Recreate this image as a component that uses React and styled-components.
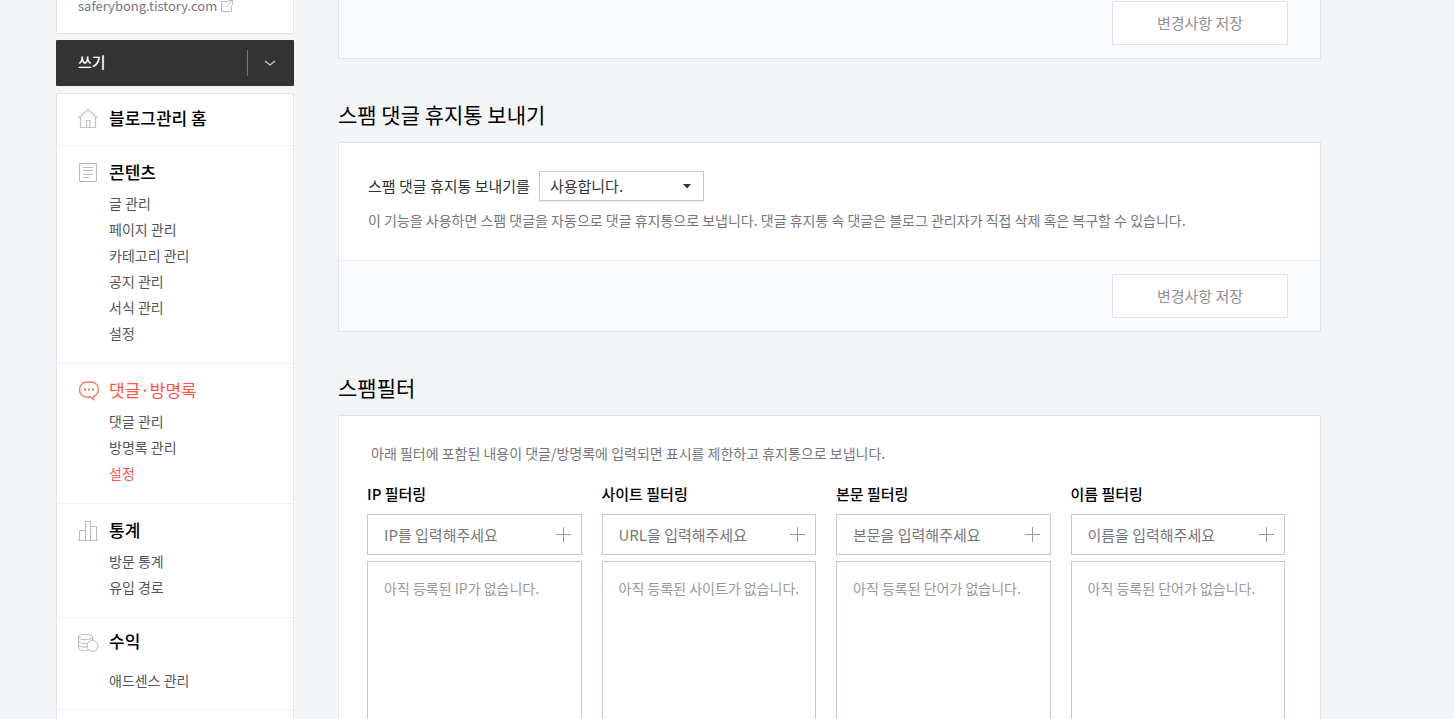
import React from "react";
import styled, { createGlobalStyle } from "styled-components";

const GlobalStyle = createGlobalStyle`
  *, *::before, *::after { box-sizing: border-box; }
  body {
    margin: 0;
    background: #f3f5f7;
    color: #333;
    font-family: "Noto Sans CJK KR", "Noto Sans", sans-serif;
    font-size: 14px;
    line-height: 20px;
  }
  button, input, select { font: inherit; margin: 0; }
  h2, h3, p, ul { margin: 0; padding: 0; font-weight: 400; }
  ul { list-style: none; }
  a { color: inherit; text-decoration: none; }
`;

const Page = styled.div`
  display: flex;
  gap: 44px;
  height: 100vh;
  overflow: hidden;
  padding: 0 133px 0 56px;
`;

const Sidebar = styled.aside`
  flex: 0 0 238px;
`;

const Profile = styled.div`
  height: 34px;
  padding: 0 21px;
  background: #fff;
  border: 1px solid #dfe3ec;
  border-top: 0;
  border-radius: 0 0 2px 2px;
`;

const BlogLink = styled.a`
  display: flex;
  align-items: center;
  gap: 4px;
  height: 11px;
  color: #777;
  font-size: 13px;
`;

const WriteBar = styled.div`
  display: flex;
  align-items: center;
  height: 46px;
  margin: 6px 0 7px;
  background: #333;
  border-radius: 1px;
`;

const WriteButton = styled.button`
  flex: 1;
  height: 46px;
  padding: 0 22px 2px;
  border: 0;
  background: none;
  color: #fff;
  font-size: 15px;
  font-weight: 500;
  text-align: left;
`;

const WriteMore = styled.button`
  display: flex;
  align-items: center;
  justify-content: center;
  width: 47px;
  height: 26px;
  padding: 0 2px 0 0;
  border: 0;
  border-left: 1px solid #777;
  background: none;
`;

const Menu = styled.nav`
  padding-bottom: 20px;
  background: #fff;
  border: 1px solid #dfe3ec;
  border-radius: 1px;
`;

const Group = styled.section`
  padding: ${(p) => (p.$compact ? "10px 21px 16px" : "13px 21px 17px")};
  ${(p) => p.$single && "padding: 11px 21px 14px;"}
  border-bottom: 1px solid #eff1f5;
`;

const GroupTitle = styled.h3`
  display: flex;
  align-items: center;
  gap: 10px;
  line-height: 26px;
  font-size: 17px;
  font-weight: ${(p) => (p.$active ? 400 : 500)};
  color: ${(p) => (p.$active ? "#ff5544" : "#000")};

  svg { flex: 0 0 21px; }
`;

const GroupList = styled.ul`
  margin-top: ${(p) => (p.$compact ? "13px" : "5px")};
  padding-left: 31px;
`;

const Item = styled.li`
  line-height: 26px;
  color: ${(p) => (p.$active ? "#ff5544" : "#555")};
`;

const Main = styled.main`
  flex: 1;
  min-width: 0;
`;

const Title = styled.h2`
  margin: 40px 0 13px;
  font-size: 21px;
  line-height: 30px;
  color: #000;
`;

const Panel = styled.section`
  background: #fff;
  border: 1px solid #dfe3ec;
  ${(p) => p.$continued && "border-top: 0;"}
`;

const PanelFoot = styled.div`
  display: flex;
  justify-content: flex-end;
  padding: ${(p) => (p.$continued ? "1px" : "13px")} 32px 13px;
  background: #fafbfd;
  ${(p) => !p.$continued && "border-top: 1px solid #eff1f5;"}
`;

const SaveButton = styled.button`
  width: 176px;
  height: 44px;
  border: 1px solid #dfe3ec;
  background: #fff;
  color: #919191;
  font-size: 15px;
`;

const SettingBody = styled.div`
  padding: 28px 29px 30px;
`;

const SettingRow = styled.div`
  display: flex;
  align-items: center;
  gap: 9px;
  margin-bottom: 9px;
  font-size: 15px;
`;

const SelectBox = styled.div`
  position: relative;
  width: 165px;

  svg {
    position: absolute;
    top: 13px;
    right: 13px;
    pointer-events: none;
  }
`;

const Select = styled.select`
  display: block;
  width: 100%;
  height: 30px;
  padding: 0 10px;
  appearance: none;
  border: 1px solid #c3cad7;
  border-radius: 0;
  box-shadow: 0 1px 1px #e7eaef;
  background: #fff;
  color: #333;
`;

const Description = styled.p`
  color: #777;
`;

const FilterBody = styled.div`
  padding: 27px 35px 28px 28px;
`;

const FilterIntro = styled(Description)`
  margin-bottom: 21px;
  padding-left: 4px;
`;

const Filters = styled.div`
  display: grid;
  grid-template-columns: repeat(4, minmax(0, 1fr));
  gap: 20px;
`;

const FilterLabel = styled.label`
  display: block;
  margin-bottom: 10px;
  font-size: 15px;
  font-weight: 500;
  color: #000;
`;

const FilterField = styled.div`
  display: flex;
  align-items: center;
  height: 41px;
  margin-bottom: 6px;
  border: 1px solid #c3cad7;
`;

const FilterInput = styled.input`
  flex: 1;
  min-width: 0;
  height: 39px;
  padding: 0 0 0 16px;
  border: 0;
  background: none;
  font-size: 15px;

  &::placeholder { color: #777; opacity: 1; }
`;

const AddButton = styled.button`
  display: flex;
  align-items: center;
  justify-content: center;
  width: 35px;
  height: 39px;
  padding: 0;
  border: 0;
  background: none;
`;

const FilterList = styled.div`
  height: 220px;
  padding: 16px;
  border: 1px solid #c3cad7;
  color: #999;
  white-space: nowrap;
`;

const HomeIcon = () => (
  <svg width="21" height="21" viewBox="0 0 21 21" fill="none" stroke="#c4c4c4" strokeWidth="1.2">
    <path d="M.5 10 10 1.500 19.500 10M2.500 8.500v11h15v-11M8.500 19.500v-7h3.500v7" />
  </svg>
);

const DocIcon = () => (
  <svg width="21" height="21" viewBox="0 0 21 21" fill="none" stroke="#b9b9b9">
    <path d="M1.500 1.500h17v18h-17zM5 5.500h10M5 8.500h10M5 12.500h10M5 15.500h6" />
  </svg>
);

const CommentIcon = () => (
  <svg width="21" height="21" viewBox="0 0 21 21" fill="none" stroke="#ff7668" strokeWidth="1.4">
    <path d="M15.500 16.500v3l-3-2.500H9.500C4.500 17 1.500 14 1.500 9.700S4.500 2 9.700 2h2.800C17.500 2 20.300 5.200 20.300 9.500c0 3.500-1.800 6-4.800 7z" />
    <path d="M6 9.500h2M10 9.500h2M14 9.500h2" strokeWidth="2" />
  </svg>
);

const ChartIcon = () => (
  <svg width="21" height="21" viewBox="0 0 21 21" fill="none" stroke="#b9b9b9">
    <path d="M0 20.500h20M1.500 20V10.500h5.500M7.500 20V1.500h5V20M13 6.500h5.500v14" />
  </svg>
);

const CoinsIcon = () => (
  <svg width="21" height="21" viewBox="0 -1 21 21" fill="none" stroke="#b9b9b9">
    <ellipse cx="7.500" cy="5" rx="7" ry="2.700" />
    <path d="M.5 5v11c0 1.500 3 2.500 7 2.500 1 0 2-.1 3-.3M14.500 5v3.500M.5 8.500c0 2 3 3 7 3 1 0 2-.1 3-.2M.5 12c0 2 3 3 7 3h1.500" />
    <circle cx="14.500" cy="14" r="5.500" fill="#fff" />
  </svg>
);

const ExternalIcon = () => (
  <svg width="12" height="12" viewBox="0 0 12 12" fill="none" stroke="#b9b9b9">
    <path d="M6 1.500H.5v10h10V6M7 .5h4.500V5M11.500 .5 5 7" />
  </svg>
);

const ChevronIcon = () => (
  <svg width="12" height="8" viewBox="0 0 12 8" fill="none" stroke="#ccc" strokeWidth="1.2">
    <path d="M1 2 6 6l5-4" />
  </svg>
);

const CaretIcon = () => (
  <svg width="8" height="5" viewBox="0 0 8 5" fill="#333">
    <path d="M0 0h8L4 4.500z" />
  </svg>
);

const PlusIcon = () => (
  <svg width="15" height="15" viewBox="0 0 15 15" fill="none" stroke="#999">
    <path d="M7.500 0v15M0 7.500h15" />
  </svg>
);

const groups = [
  { title: "블로그관리 홈", icon: <HomeIcon />, single: true, items: [] },
  {
    title: "콘텐츠",
    icon: <DocIcon />,
    items: ["글 관리", "페이지 관리", "카테고리 관리", "공지 관리", "서식 관리", "설정"],
  },
  {
    title: "댓글·방명록",
    icon: <CommentIcon />,
    active: true,
    current: "설정",
    items: ["댓글 관리", "방명록 관리", "설정"],
  },
  { title: "통계", icon: <ChartIcon />, items: ["방문 통계", "유입 경로"] },
  { title: "수익", icon: <CoinsIcon />, compact: true, items: ["애드센스 관리"] },
];

const filters = [
  { id: "ip", label: "IP 필터링", hint: "IP를 입력해주세요", empty: "아직 등록된 IP가 없습니다." },
  { id: "site", label: "사이트 필터링", hint: "URL을 입력해주세요", empty: "아직 등록된 사이트가 없습니다." },
  { id: "body", label: "본문 필터링", hint: "본문을 입력해주세요", empty: "아직 등록된 단어가 없습니다." },
  { id: "name", label: "이름 필터링", hint: "이름을 입력해주세요", empty: "아직 등록된 단어가 없습니다." },
];

export default function App() {
  return (
    <>
      <GlobalStyle />
      <Page>
        <Sidebar>
          <Profile>
            <BlogLink href="#blog">
              saferybong.tistory.com
              <ExternalIcon />
            </BlogLink>
          </Profile>
          <WriteBar>
            <WriteButton type="button">쓰기</WriteButton>
            <WriteMore type="button" aria-label="쓰기 메뉴 열기">
              <ChevronIcon />
            </WriteMore>
          </WriteBar>
          <Menu>
            {groups.map((g) => (
              <Group key={g.title} $single={g.single} $compact={g.compact}>
                <GroupTitle $active={g.active}>
                  {g.icon}
                  <a href="#menu">{g.title}</a>
                </GroupTitle>
                {g.items.length > 0 && (
                  <GroupList $compact={g.compact}>
                    {g.items.map((item) => (
                      <Item key={item} $active={g.current === item}>
                        <a href="#item">{item}</a>
                      </Item>
                    ))}
                  </GroupList>
                )}
              </Group>
            ))}
          </Menu>
        </Sidebar>
        <Main>
          <Panel $continued>
            <PanelFoot $continued>
              <SaveButton type="button">변경사항 저장</SaveButton>
            </PanelFoot>
          </Panel>

          <Title>스팸 댓글 휴지통 보내기</Title>
          <Panel>
            <SettingBody>
              <SettingRow>
                <label htmlFor="trash">스팸 댓글 휴지통 보내기를</label>
                <SelectBox>
                  <Select id="trash" defaultValue="on">
                    <option value="on">사용합니다.</option>
                    <option value="off">사용하지 않습니다.</option>
                  </Select>
                  <CaretIcon />
                </SelectBox>
              </SettingRow>
              <Description>
                이 기능을 사용하면 스팸 댓글을 자동으로 댓글 휴지통으로 보냅니다. 댓글 휴지통 속 댓글은 블로그 관리자가 직접 삭제 혹은 복구할 수 있습니다.
              </Description>
            </SettingBody>
            <PanelFoot>
              <SaveButton type="button">변경사항 저장</SaveButton>
            </PanelFoot>
          </Panel>

          <Title>스팸필터</Title>
          <Panel>
            <FilterBody>
              <FilterIntro>
                아래 필터에 포함된 내용이 댓글/방명록에 입력되면 표시를 제한하고 휴지통으로 보냅니다.
              </FilterIntro>
              <Filters>
                {filters.map((f) => (
                  <div key={f.id}>
                    <FilterLabel htmlFor={f.id}>{f.label}</FilterLabel>
                    <FilterField>
                      <FilterInput id={f.id} type="text" placeholder={f.hint} />
                      <AddButton type="button" aria-label="추가">
                        <PlusIcon />
                      </AddButton>
                    </FilterField>
                    <FilterList>{f.empty}</FilterList>
                  </div>
                ))}
              </Filters>
            </FilterBody>
          </Panel>
        </Main>
      </Page>
    </>
  );
}
